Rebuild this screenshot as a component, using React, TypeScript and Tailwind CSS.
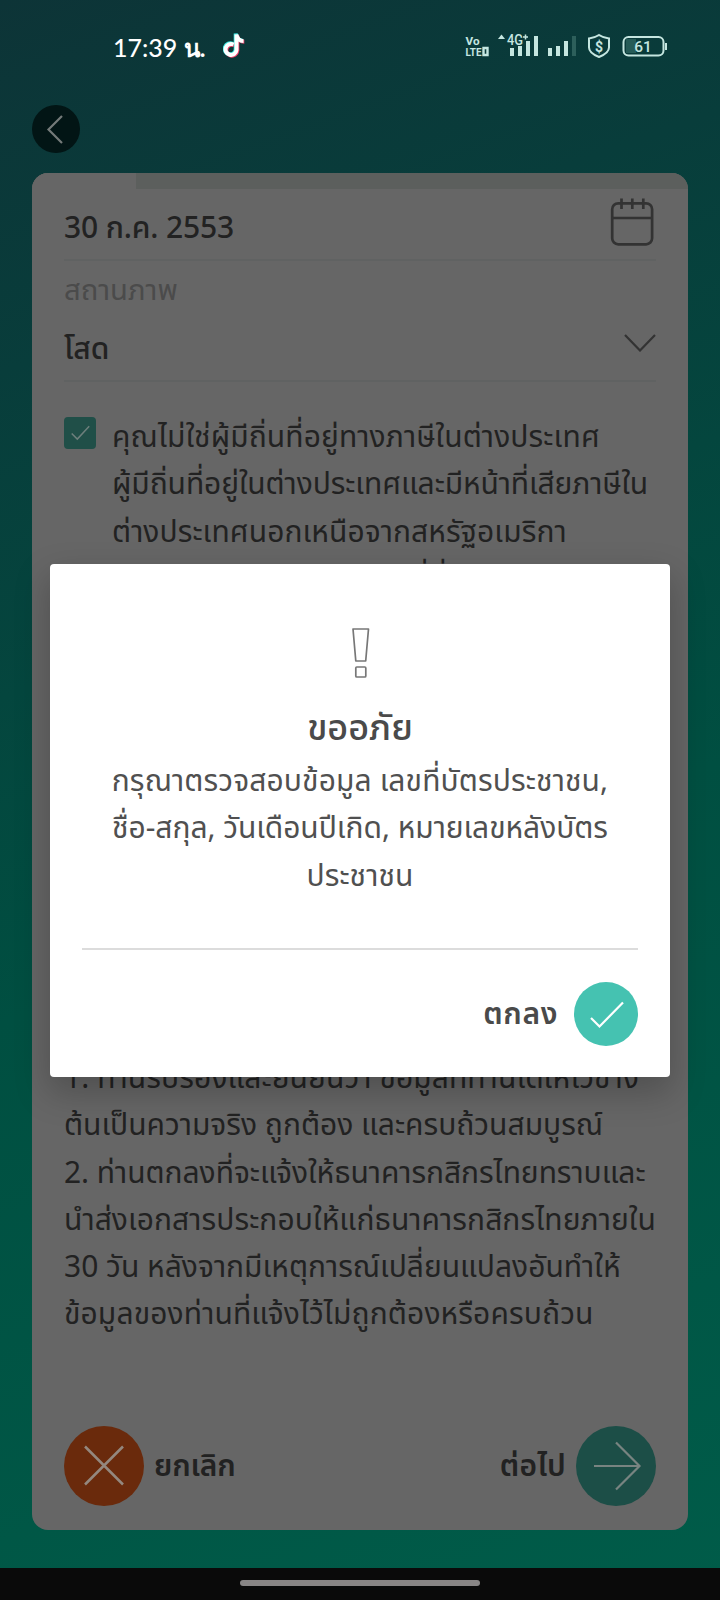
import { ReactNode } from 'react'

const TERMS = [
    { text: '1. ท่านรับรองและยืนยันว่า ข้อมูลที่ท่านได้ให้ไว้ข้าง', spacing: 'tracking-[0.08px]' },
    { text: 'ต้นเป็นความจริง ถูกต้อง และครบถ้วนสมบูรณ์', spacing: 'tracking-[0px]' },
    { text: '2. ท่านตกลงที่จะแจ้งให้ธนาคารกสิกรไทยทราบและ', spacing: 'tracking-[-0.05px]' },
    { text: 'นำส่งเอกสารประกอบให้แก่ธนาคารกสิกรไทยภายใน', spacing: 'tracking-[0.07px]' },
    { text: '30 วัน หลังจากมีเหตุการณ์เปลี่ยนแปลงอันทำให้', spacing: 'tracking-[0px]' },
    { text: 'ข้อมูลของท่านที่แจ้งไว้ไม่ถูกต้องหรือครบถ้วน', spacing: 'tracking-[0.12px]' }
]

const DECLARATION = [
    { text: 'คุณไม่ใช่ผู้มีถิ่นที่อยู่ทางภาษีในต่างประเทศ', spacing: 'tracking-[0.1px]' },
    { text: 'ผู้มีถิ่นที่อยู่ในต่างประเทศและมีหน้าที่เสียภาษีใน', spacing: 'tracking-[-0.1px]' },
    { text: 'ต่างประเทศนอกเหนือจากสหรัฐอเมริกา', spacing: 'tracking-[0.05px]' },
    { text: 'และยอมรับตามข้อกำหนดที่นี่รวมถึงใน', spacing: 'tracking-[0px]' }
]

const MESSAGE = [
    { text: 'กรุณาตรวจสอบข้อมูล เลขที่บัตรประชาชน,', spacing: 'tracking-[0.12px]' },
    { text: 'ชื่อ-สกุล, วันเดือนปีเกิด, หมายเลขหลังบัตร', spacing: 'tracking-[-0.05px]' },
    { text: 'ประชาชน', spacing: 'tracking-[0.1px]' }
]

function Lines({ items }: { items: { text: string; spacing: string }[] }) {
    return (
        <>
            {items.map((item) => (
                <p key={item.text} className={`whitespace-nowrap ${item.spacing}`}>{item.text}</p>
            ))}
        </>
    )
}

function Circle({ className, children }: { className: string; children: ReactNode }) {
    return <span className={`flex shrink-0 items-center justify-center rounded-full ${className}`}>{children}</span>
}

function StatusBar() {
    return (
        <header className="flex h-[92px] shrink-0 items-center justify-between pl-[113px] pr-[53px] pt-[2px] text-white">
            <div className="flex items-center">
                <span className="whitespace-nowrap pt-[2px] font-['Lato','Noto_Sans',sans-serif] text-[25px] font-medium">
                    17:39 <span className="text-[24px] font-bold">น.</span>
                </span>
                {/* TikTok */}
                <svg className="mb-[2px] ml-[18px] h-[26px] w-[22px]" viewBox="0 0 22 26">
                    <g fill="none" strokeWidth="4">
                        <path d="M10.500 11.500A5.500 5.500 0 1 0 13.500 17V2C14 5.500 17 8 20.500 8" stroke="#f5406a" transform="translate(.8 .8)" />
                        <path d="M10.500 11.500A5.500 5.500 0 1 0 13.500 17V1C14 5.500 17 8 20 8" stroke="#3fe8e4" transform="translate(-.8 -.6)" />
                        <path d="M10.500 11.500A5.500 5.500 0 1 0 13.500 17V1.500C14 5.500 17 8 20.500 8" stroke="#fff" />
                    </g>
                </svg>
            </div>
            <svg className="h-[30px] w-[204px]" viewBox="463 32 204 30" fill="#c5e6e0" fontFamily="Roboto, sans-serif" fontWeight="700">
                <text x="465.500" y="44.500" fontSize="11.500" textLength="14" lengthAdjust="spacingAndGlyphs">Vo</text>
                <text x="465.500" y="56" fontSize="11.500" textLength="16" lengthAdjust="spacingAndGlyphs">LTE</text>
                <path d="M483.500 48h4v7h-4z" fill="none" stroke="#c5e6e0" strokeWidth="2.400" />
                <path d="M498 39l3.500-4.500L505 39z" />
                <text x="507" y="45" fontSize="14" fontWeight="500" textLength="16" lengthAdjust="spacingAndGlyphs">4G</text>
                <path d="M523 37h5M525.500 34.500v5" stroke="#c5e6e0" strokeWidth="1.500" />
                <path d="M510 48h4v8h-4zM518 46h4v10h-4zM526 41h4v15h-4zM534 36h4v20h-4zM548 48h4v8h-4zM556 46h4v10h-4zM564 41h4v15h-4z" />
                <path d="M572 36h4v20h-4z" fill="#2d5f5b" />
                <path d="M599 35c3 2 6 3 10 3.500v9c0 4-5 7.500-10 9.500-5-2-10-5.500-10-9.500v-9c4-.500 7-1.500 10-3.500z" fill="none" stroke="#c5e6e0" strokeWidth="2" />
                <text x="599" y="51.500" fontSize="14" fontWeight="700" textAnchor="middle">$</text>
                <rect x="626" y="39" width="10" height="14" fill="#255b57" />
                <rect x="623.500" y="37" width="40" height="18.500" rx="5" fill="none" stroke="#c5e6e0" strokeWidth="2" />
                <path d="M665 43h2v7h-2z" />
                <text x="643" y="51.800" fontSize="15.500" fontWeight="500" textAnchor="middle">61</text>
            </svg>
        </header>
    )
}

function Dialog() {
    return (
        <div className="absolute left-[50px] top-[564px] flex h-[513px] w-[620px] flex-col rounded-[4px] bg-white px-8 text-[#4a4a4a] shadow-[0_14px_34px_2px_rgba(0,0,0,0.22)]">
            <svg className="mt-[62px] h-[54px] w-6 self-center" viewBox="-0.500 0 24 54" fill="none" stroke="#777" strokeWidth="1.700" strokeLinejoin="round">
                <path d="M4.500 3h15.500l-2.800 32H7.300z" />
                <rect x="7.300" y="41" width="10" height="10" rx="1" />
            </svg>
            <h2 className="mt-[20px] h-[56px] text-center text-[36px] leading-[54px] font-medium">ขออภัย</h2>
            <div className="flex h-[191px] flex-col items-center text-[30px] leading-[47.400px] text-[#505050]">
                <Lines items={MESSAGE} />
            </div>
            <div className="mt-px h-[2px] w-full shrink-0 bg-[#dcdcdc]" />
            <div className="flex h-[127px] items-center justify-end gap-4">
                <span className="pb-[2px] text-[30px] font-semibold tracking-[0.6px]">ตกลง</span>
                <Circle className="size-16 bg-[#45c2b1]">
                    <svg className="size-16" viewBox="0 0 64 64" fill="none" stroke="#fff" strokeWidth="2.200">
                        <path d="M17 36l8.500 8.500L49 20.500" />
                    </svg>
                </Circle>
            </div>
        </div>
    )
}

export default function App() {
    return (
        <div className="relative flex h-[1600px] w-[720px] flex-col overflow-hidden bg-[linear-gradient(160deg,#0d3437_0%,#083d3b_20%,#004f41_55%,#005c49_100%)] font-['Noto_Sans','Noto_Sans_Thai',sans-serif] text-[#222]">
            <StatusBar />
            <div className="h-[81px] shrink-0 px-8 pt-[13px]">
                <Circle className="size-12 bg-[#021515]">
                    <svg className="size-12" viewBox="0 0 48 48" fill="none" stroke="#747a79" strokeWidth="2.200">
                        <path d="M30 11L16.500 24.500 30 38" />
                    </svg>
                </Circle>
            </div>

            <main className="mx-8 flex h-[1357px] shrink-0 flex-col overflow-hidden rounded-[16px] bg-[#666]">
                <div className="h-4 shrink-0 bg-[#5c5f5d]">
                    <div className="h-4 w-[104px] bg-[#666]" />
                </div>
                <section className="px-8">
                    <div className="flex h-[72px] items-center justify-between border-b-2 border-[#606262]">
                        <span className="whitespace-nowrap pt-[5px] text-[30px] font-medium tracking-[-0.15px]">30 ก.ค. 2553</span>
                        <svg className="mb-1 h-[50px] w-12" viewBox="0 0 48 50" fill="none" stroke="#333" strokeWidth="2.700">
                            <rect x="4.200" y="6.300" width="39.900" height="41" rx="6" />
                            <path d="M4 21h40M13.500 1.500V12M24.300 1.500V12M35.300 1.500V12" />
                        </svg>
                    </div>
                    <p className="h-[54px] pt-[6px] text-[29.200px] leading-[44px] text-[#4b4b4b]">สถานภาพ</p>
                    <div className="flex h-[67px] items-start justify-between border-b-2 border-[#606262]">
                        <span className="text-[30px] leading-[65px] font-medium">โสด</span>
                        <svg className="mt-[17px] h-5 w-8" viewBox="0 0 32 20" fill="none" stroke="#333" strokeWidth="2.200">
                            <path d="M1 3l15 15.500L31 3" />
                        </svg>
                    </div>
                    <div className="flex h-[671px] gap-4 pt-[30px]">
                        <span className="mt-[5px] flex size-8 shrink-0 items-center justify-center rounded-[4px] bg-[#204f48]">
                            <svg className="size-8" viewBox="0 0 32 32" fill="none" stroke="#6d7f7c" strokeWidth="1.500">
                                <path d="M7.700 16.500l5.600 5.600L25.200 9.200" />
                            </svg>
                        </span>
                        <div className="text-[30px] leading-[47.400px]">
                            <Lines items={DECLARATION} />
                        </div>
                    </div>
                    <div className="h-[373px] text-[30px] leading-[47.300px]">
                        <Lines items={TERMS} />
                    </div>
                </section>
                <footer className="flex h-20 items-center justify-between px-8 text-[30px] font-semibold">
                    <button className="flex items-center gap-[10px]">
                        <Circle className="size-20 bg-[#6a2a0c]">
                            <svg className="size-20" viewBox="0 0.500 80 80" fill="none" stroke="#94887f" strokeWidth="2.500">
                                <path d="M21 21l38 38M59 21L21 59" />
                            </svg>
                        </Circle>
                        <span className="pb-1 tracking-[-0.2px]">ยกเลิก</span>
                    </button>
                    <button className="flex items-center gap-[10px]">
                        <span className="pb-1 tracking-[0.2px]">ต่อไป</span>
                        <Circle className="size-20 bg-[#1c4e47]">
                            <svg className="size-20" viewBox="0 0.500 80 80" fill="none" stroke="#788481" strokeWidth="2.200">
                                <path d="M18 40.500h45M40 17l23.500 23.500L40 64" />
                            </svg>
                        </Circle>
                    </button>
                </footer>
            </main>

            <div className="mt-auto flex h-8 shrink-0 justify-center bg-[#0a0a0a] pt-3">
                <div className="h-[6px] w-60 rounded-full bg-[#888585]" />
            </div>
            <Dialog />
        </div>
    )
}
